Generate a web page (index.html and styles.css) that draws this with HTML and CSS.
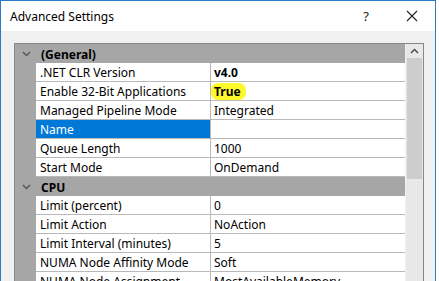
FILE: index.html
```html
<!DOCTYPE html>
<html lang="en">
<head>
    <meta charset="UTF-8">
    <title>Advanced Settings</title>
    <link rel="stylesheet" href="styles.css">
</head>
<body>
    <div class="window">
        <!-- Title bar -->
        <div class="titlebar">
            <span class="title">Advanced Settings</span>
            <span class="help">?</span>
            <span class="close">
                <svg width="12" height="12" viewBox="0 0 12 12"><path d="M1 1L11 11M11 1L1 11" stroke="#222" stroke-width="1.1" fill="none"/></svg>
            </span>
        </div>

        <div class="content">
            <div class="grid">
                <div class="rows">
                    <div class="category">
                        <span class="chev"><svg width="9" height="6" viewBox="0 0 9 6"><path d="M1 1L4.5 4.5L8 1" stroke="#555" stroke-width="1.4" fill="none"/></svg></span>
                        <span class="cat-label">(General)</span>
                    </div>
                    <div class="row"><span class="margin"></span><span class="name">.NET CLR Version</span><span class="value bold">v4.0</span></div>
                    <div class="row"><span class="margin"></span><span class="name">Enable 32-Bit Applications</span><span class="value bold"><span class="marker">True</span></span></div>
                    <div class="row"><span class="margin"></span><span class="name">Managed Pipeline Mode</span><span class="value">Integrated</span></div>
                    <div class="row selected"><span class="margin"></span><span class="name">Name</span><span class="value"></span></div>
                    <div class="row"><span class="margin"></span><span class="name">Queue Length</span><span class="value">1000</span></div>
                    <div class="row"><span class="margin"></span><span class="name">Start Mode</span><span class="value">OnDemand</span></div>
                    <div class="category">
                        <span class="chev"><svg width="9" height="6" viewBox="0 0 9 6"><path d="M1 1L4.5 4.5L8 1" stroke="#555" stroke-width="1.4" fill="none"/></svg></span>
                        <span class="cat-label">CPU</span>
                    </div>
                    <div class="row"><span class="margin"></span><span class="name">Limit (percent)</span><span class="value">0</span></div>
                    <div class="row"><span class="margin"></span><span class="name">Limit Action</span><span class="value">NoAction</span></div>
                    <div class="row"><span class="margin"></span><span class="name">Limit Interval (minutes)</span><span class="value">5</span></div>
                    <div class="row"><span class="margin"></span><span class="name">NUMA Node Affinity Mode</span><span class="value">Soft</span></div>
                    <div class="row"><span class="margin"></span><span class="name">NUMA Node Assignment</span><span class="value">MostAvailableMemory</span></div>
                </div>
                <div class="scrollbar">
                    <div class="arrow"><svg width="9" height="6" viewBox="0 0 9 6"><path d="M1 5L4.5 1.5L8 5" stroke="#444" stroke-width="1.4" fill="none"/></svg></div>
                    <div class="thumb"></div>
                </div>
            </div>
        </div>
    </div>
</body>
</html>
```

FILE: styles.css
```css
body {
    margin: 0;
    padding: 0;
    background-color: #ffffff;
    font-family: "Noto Sans", "Open Sans", sans-serif;
    font-size: 12px;
    color: #000;
}

.window {
    width: 434px;
    height: 281px;
    border-left: 1px solid #2b7bc4;
    border-right: 1px solid #2b7bc4;
    border-top: 1px solid #2b7bc4;
    background-color: #f0f0f0;
    overflow: hidden;
}

.titlebar {
    display: flex;
    align-items: center;
    height: 30px;
    background-color: #ffffff;
    padding-left: 9px;
}

.title {
    flex: 1;
    font-size: 12px;
    color: #000;
}

.help {
    width: 46px;
    text-align: center;
    font-size: 13px;
    color: #222;
}

.close {
    width: 46px;
    display: flex;
    justify-content: center;
}

.content {
    padding: 12px 0 0 13px;
}

.grid {
    display: flex;
    width: 408px;
    border: 1px solid #828790;
    border-bottom: none;
    background-color: #ffffff;
    height: 240px;
    overflow: hidden;
}

.rows {
    width: 391px;
}

.category {
    display: flex;
    align-items: center;
    height: 19px;
    background-color: #a6a6a6;
    font-weight: bold;
}

.chev {
    width: 21px;
    display: flex;
    justify-content: center;
    padding-left: 1px;
}

.cat-label {
    padding-left: 4px;
    padding-top: 2px;
}

.row {
    display: flex;
    height: 19px;
}

.margin {
    width: 21px;
    background-color: #a6a6a6;
}

.name {
    width: 170px;
    padding-left: 4px;
    padding-top: 1px;
    border-bottom: 1px solid #b9b9b9;
    border-right: 1px solid #b9b9b9;
    line-height: 17px;
    white-space: nowrap;
    overflow: hidden;
}

.value {
    flex: 1;
    padding-left: 3px;
    padding-top: 1px;
    border-bottom: 1px solid #b9b9b9;
    line-height: 17px;
    white-space: nowrap;
    overflow: hidden;
}

.bold {
    font-weight: bold;
}

.marker {
    display: inline-block;
    background-color: #fdf92c;
    border-radius: 7px;
    padding: 0 5px 0 3px;
    margin-left: -3px;
}

.row.selected .name {
    background-color: #0078d7;
    color: #ffffff;
}

.scrollbar {
    width: 17px;
    background-color: #e8e8e8;
    border-left: 1px solid #f0f0f0;
}

.arrow {
    height: 14px;
    display: flex;
    align-items: center;
    justify-content: center;
}

.thumb {
    margin: 0 1px;
    height: 121px;
    background-color: #cdcdcd;
}
```
